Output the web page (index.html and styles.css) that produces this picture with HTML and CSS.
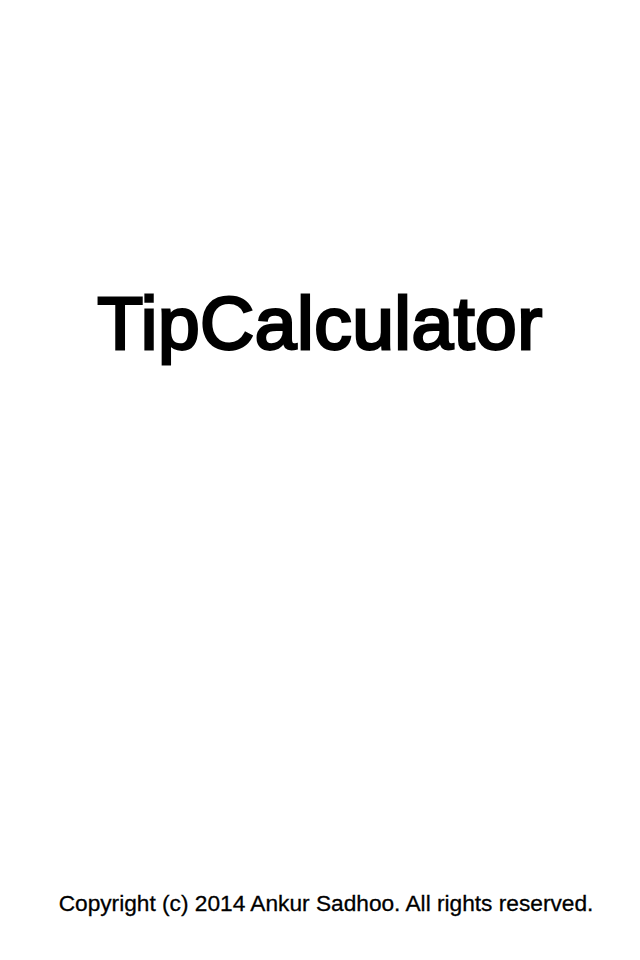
FILE: index.html
```html
<!DOCTYPE html>
<html>
<head>
<meta charset="utf-8">
<link rel="stylesheet" href="styles.css">
</head>
<body>
<main class="screen">
  <h1 class="title">TipCalculator</h1>
  <p class="copyright">Copyright (c) 2014 Ankur Sadhoo. All rights reserved.</p>
</main>
</body>
</html>
```
FILE: styles.css
```css
html, body {
  margin: 0;
  padding: 0;
  background: #ffffff;
}
.screen {
  box-sizing: border-box;
  height: 960px;
  display: flex;
  flex-direction: column;
  align-items: center;
  padding: 286px 0 45px;
  font-family: "Liberation Sans", Arial, sans-serif;
  color: #000;
}
.title {
  margin: 0;
  font-size: 75px;
  line-height: 75px;
  font-weight: normal;
  letter-spacing: 0.5px;
  -webkit-text-stroke: 2.8px #000;
}
.copyright {
  margin: auto 0 0 12px;
  font-size: 22.7px;
  line-height: 23px;
  -webkit-text-stroke: 0.3px #000;
}
```
